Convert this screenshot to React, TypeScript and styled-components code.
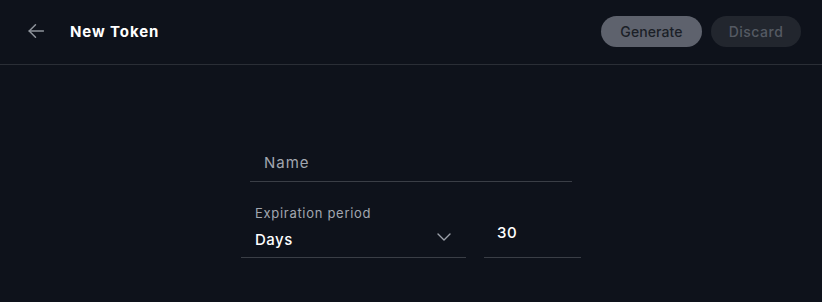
import React from "react";
import styled, { createGlobalStyle } from "styled-components";

const Global = createGlobalStyle`
  html, body { margin: 0; padding: 0; background: #0e121b; }
  body { font-family: Inter, "Noto Sans", sans-serif; color: #fff; }
  * { box-sizing: border-box; }
`;

const Page = styled.div`
  width: 822px;
  height: 302px;
  background: #0e121b;
  display: flex;
  flex-direction: column;
`;

const Header = styled.header`
  height: 65px;
  border-bottom: 1px solid #2a2e36;
  display: flex;
  align-items: center;
  padding: 0 21px 2px 28px;
`;

const BackButton = styled.button`
  background: none;
  border: none;
  padding: 0;
  width: 16px;
  height: 16px;
  display: flex;
  color: #8f949c;
  cursor: pointer;
`;

const Title = styled.h1`
  margin: 0 0 0 26px;
  font-size: 15px;
  font-weight: 700;
  letter-spacing: 0.9px;
  color: #ffffff;
  flex: 1;
`;

const Actions = styled.div`
  display: flex;
  gap: 9px;
`;

const Pill = styled.button<{ $primary?: boolean }>`
  height: 31px;
  border: none;
  border-radius: 16px;
  font-family: inherit;
  font-size: 14px;
  font-weight: 500;
  letter-spacing: ${(p) => (p.$primary ? "0.1px" : "0.5px")};
  padding: 0;
  width: ${(p) => (p.$primary ? "101px" : "90px")};
  background: ${(p) => (p.$primary ? "#5e626d" : "#22262e")};
  color: ${(p) => (p.$primary ? "#1b1f27" : "#555a63")};
`;

const Main = styled.main`
  display: flex;
  flex-direction: column;
  align-items: center;
  padding-top: 80px;
`;

const NameField = styled.div`
  width: 322px;
  height: 37px;
  border-bottom: 1px solid #3a3e46;
  display: flex;
  align-items: center;
  padding: 0 14px 2px;
  font-size: 15px;
  letter-spacing: 1px;
  color: #a2a7b0;
`;

const Row = styled.div`
  width: 340px;
  display: flex;
  justify-content: space-between;
  align-items: flex-end;
  margin-top: 23px;
`;

const SelectField = styled.div`
  width: 225px;
  border-bottom: 1px solid #3a3e46;
  padding: 0 14px 8px 14px;
  display: flex;
  flex-direction: column;
`;

const Label = styled.span`
  font-size: 13px;
  line-height: 16px;
  letter-spacing: 0.7px;
  color: #a2a7b0;
`;

const SelectRow = styled.div`
  display: flex;
  align-items: center;
  justify-content: space-between;
  margin-top: 8px;
  height: 20px;
`;

const Value = styled.span`
  font-size: 15px;
  font-weight: 500;
  letter-spacing: 0.5px;
  color: #ffffff;
`;

const Chevron = styled.span`
  display: flex;
  color: #9ca1aa;
  margin-right: 1px;
  margin-top: -4px;
`;

const NumberField = styled.div`
  width: 97px;
  border-bottom: 1px solid #3a3e46;
  padding: 0 13px 14px;
  height: 36px;
  display: flex;
  align-items: center;
`;

export default function App() {
  return (
    <>
      <Global />
      <Page>
        <Header>
          <BackButton aria-label="Back">
            <svg width="16" height="16" viewBox="0 0 16 16" fill="none" stroke="currentColor" strokeWidth="1.5" strokeLinecap="round" strokeLinejoin="round">
              <path d="M15.5 8H1.2" />
              <path d="M7.5 1.8L1.2 8l6.3 6.2" />
            </svg>
          </BackButton>
          <Title>New Token</Title>
          <Actions>
            <Pill $primary>Generate</Pill>
            <Pill>Discard</Pill>
          </Actions>
        </Header>
        <Main>
          <NameField>Name</NameField>
          <Row>
            <SelectField>
              <Label>Expiration period</Label>
              <SelectRow>
                <Value>Days</Value>
                <Chevron>
                  <svg width="14" height="8" viewBox="0 0 14 8" fill="none" stroke="currentColor" strokeWidth="1.4" strokeLinecap="round" strokeLinejoin="round">
                    <path d="M1 1l6 6 6-6" />
                  </svg>
                </Chevron>
              </SelectRow>
            </SelectField>
            <NumberField>
              <Value>30</Value>
            </NumberField>
          </Row>
        </Main>
      </Page>
    </>
  );
}
